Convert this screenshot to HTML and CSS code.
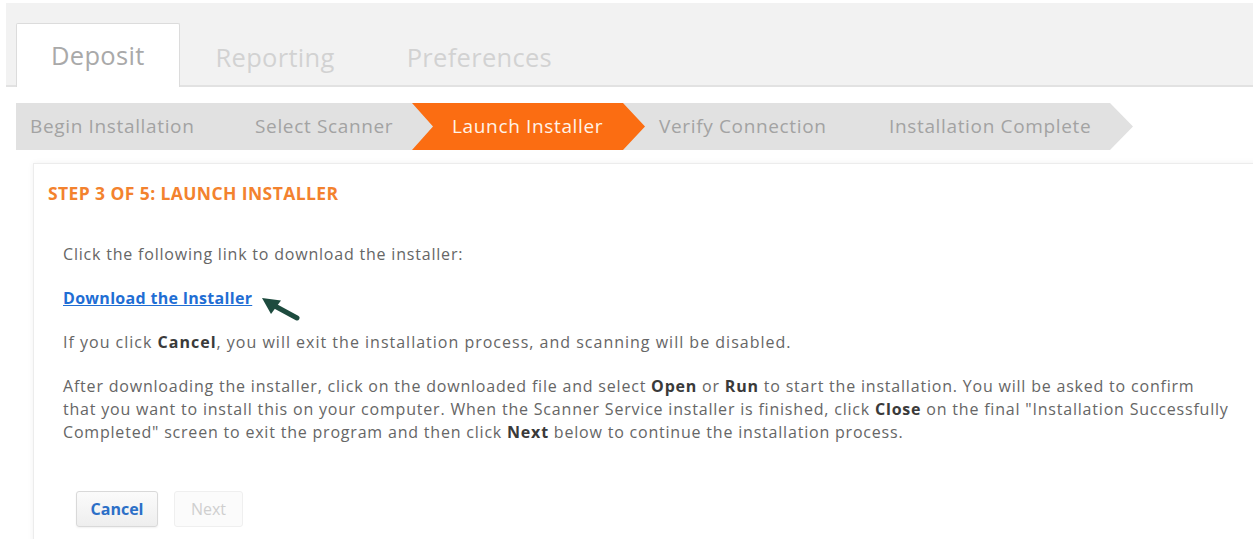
FILE: index.html
```html
<!DOCTYPE html>
<html lang="en">
<head>
<meta charset="utf-8">
<title>Deposit – Scanner Installation</title>
<link rel="stylesheet" href="styles.css">
</head>
<body>
<div class="page">
  <nav class="tabs">
    <span class="tab tab-active">Deposit</span>
    <span class="tab">Reporting</span>
    <span class="tab">Preferences</span>
  </nav>

  <ol class="steps">
    <li class="step step-1">Begin Installation</li>
    <li class="step step-2">Select Scanner</li>
    <li class="step step-3 step-current">Launch Installer</li>
    <li class="step step-4">Verify Connection</li>
    <li class="step step-5">Installation Complete</li>
  </ol>

  <section class="card">
    <h2 class="card-title">STEP 3 OF 5: LAUNCH INSTALLER</h2>
    <div class="card-body">
      <p>Click the following link to download the installer:</p>
      <p class="link-row">
        <a class="download" href="#">Download the Installer</a>
        <svg class="pointer" width="44" height="28" viewBox="0 0 44 28" aria-hidden="true">
          <path d="M38 22 L14 9" stroke="#1d4b3e" stroke-width="5" stroke-linecap="round" fill="none"/>
          <path d="M3 2 L22 4.5 L12 18 Z" fill="#1d4b3e"/>
        </svg>
      </p>
      <p class="wide">If you click <b>Cancel</b>, you will exit the installation process, and scanning will be disabled.</p>
      <p>After downloading the installer, click on the downloaded file and select <b>Open</b> or <b>Run</b> to start the installation. You will be asked to confirm<br>that you want to install this on your computer. When the Scanner Service installer is finished, click <b>Close</b> on the final "Installation Successfully<br>Completed" screen to exit the program and then click <b>Next</b> below to continue the installation process.</p>
      <div class="actions">
        <button class="btn btn-primary" type="button">Cancel</button>
        <button class="btn btn-disabled" type="button" disabled>Next</button>
      </div>
    </div>
  </section>
</div>
</body>
</html>
```

FILE: styles.css
```css
html, body {
  margin: 0;
  padding: 0;
  background: #ffffff;
  overflow: hidden;
}

.page {
  padding: 3px 0 0 6px;
  font-family: "Open Sans", "Noto Sans", sans-serif;
  color: #666;
}

/* top navigation tabs */
.tabs {
  display: flex;
  align-items: flex-end;
  height: 82px;
  padding-left: 10px;
  background: #f2f2f2;
  border-bottom: 2px solid #e2e2e2;
}

.tab {
  padding: 0 35px;
  height: 62px;
  line-height: 62px;
  font-size: 25.5px;
  letter-spacing: 0.3px;
  color: #d2d2d2;
  margin-bottom: -2px;
  box-sizing: border-box;
  border: 1px solid transparent;
  border-bottom: none;
}

.tab-active {
  background: #ffffff;
  color: #a9a9a9;
  border-color: #dcdcdc;
  border-radius: 2px 2px 0 0;
  height: 64px;
  padding: 0 34px;
}

/* wizard progress bar */
.steps {
  list-style: none;
  margin: 16px 0 0 10px;
  padding: 0;
  display: flex;
  width: 1117px;
  height: 47px;
  background: #e1e1e1;
  clip-path: polygon(0 0, calc(100% - 23px) 0, 100% 50%, calc(100% - 23px) 100%, 0 100%);
}

.step {
  box-sizing: border-box;
  height: 47px;
  line-height: 47px;
  font-size: 19px;
  letter-spacing: 0.65px;
  color: #a3a3a3;
  white-space: nowrap;
}

.step-1 { width: 209px; padding-left: 14px; }
.step-2 { width: 187px; padding-left: 30px; }
.step-3 { width: 233px; padding-left: 40px; }
.step-4 { width: 225px; padding-left: 14px; }
.step-5 { flex: 1; padding-left: 19px; }

.step-current {
  background: #fb6d12;
  color: #fff3e8;
  clip-path: polygon(0 0, calc(100% - 22px) 0, 100% 50%, calc(100% - 22px) 100%, 0 100%, 21px 50%);
}

/* content card */
.card {
  margin: 13px -30px 0 27px;
  background: #fff;
  border: 1px solid #ececec;
  box-shadow: 0 0 6px rgba(0, 0, 0, 0.06);
  padding: 19px 0 24px 14px;
}

.card-title {
  margin: 0;
  font-size: 17.5px;
  line-height: 20px;
  font-weight: 700;
  color: #f3822e;
  letter-spacing: 0.4px;
}

.card-body {
  padding: 40px 0 0 15px;
  font-size: 16px;
  line-height: 23px;
  letter-spacing: 0.8px;
}

.card-body p {
  margin: 0 0 21px;
  white-space: nowrap;
}

.card-body .wide {
  letter-spacing: 1px;
}

.card-body b {
  color: #3a3a3a;
  font-weight: 700;
}

.link-row {
  display: flex;
  align-items: flex-start;
  height: 23px;
}

.download {
  color: #1f6ed4;
  font-weight: 700;
  text-decoration: underline;
  letter-spacing: 0.3px;
}

.pointer {
  flex: none;
  margin: 9px 0 0 7px;
}

.actions {
  display: flex;
  gap: 16px;
  margin: 47px 0 0 13px;
}

.btn {
  font-family: "Open Sans", "Noto Sans", sans-serif;
  font-size: 16px;
  height: 36px;
  border-radius: 3px;
  cursor: pointer;
}

.btn-primary {
  width: 82px;
  color: #2c6fc7;
  font-weight: 700;
  background: linear-gradient(#fbfbfb, #eeeeee);
  border: 1px solid #d9d9d9;
  box-shadow: 0 1px 2px rgba(0, 0, 0, 0.06);
}

.btn-disabled {
  width: 69px;
  color: #cfcfcf;
  background: #fbfbfb;
  border: 1px solid #efefef;
  cursor: default;
}
```
